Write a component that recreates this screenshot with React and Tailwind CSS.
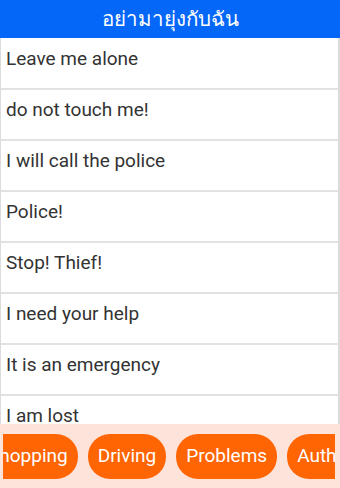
const phrases = [
  'Leave me alone',
  'do not touch me!',
  'I will call the police',
  'Police!',
  'Stop! Thief!',
  'I need your help',
  'It is an emergency',
  'I am lost',
];

const categories = ['Shopping', 'Driving', 'Problems', 'Authorities'];

export default function App() {
  return (
    <div className="w-[340px] h-[488px] flex flex-col bg-white overflow-hidden font-['Roboto','Noto_Sans',sans-serif]">
      {/* Title bar */}
      <div className="h-[38px] shrink-0 bg-[#0567f7] flex items-center justify-center">
        <span className="text-white text-[20.5px] leading-none">อย่ามายุ่งกับฉัน</span>
      </div>

      {/* Phrase list */}
      <div className="flex-1 overflow-hidden border-l border-r-2 border-[#dcdcdc] pt-[1px]">
        {phrases.map((p, i) => (
          <div key={i} className="h-[51px] border-b-2 border-[#e2e2e2] px-[5px] pt-[8px]">
            <span className="text-[19px] leading-[24px] text-[#333333]">{p}</span>
          </div>
        ))}
      </div>

      {/* Category chips */}
      <div className="h-[64px] shrink-0 bg-[#fde3d9] flex items-center pl-[3px] pr-[5px]">
        <div className="flex-1 overflow-hidden">
          <div className="flex gap-[10px] ml-[-25px]">
            {categories.map((c) => (
              <div
                key={c}
                className="shrink-0 h-[45px] rounded-[22px] bg-[#ff6503] px-[10px] flex items-center text-white text-[19px]"
              >
                {c}
              </div>
            ))}
          </div>
        </div>
      </div>
    </div>
  );
}
